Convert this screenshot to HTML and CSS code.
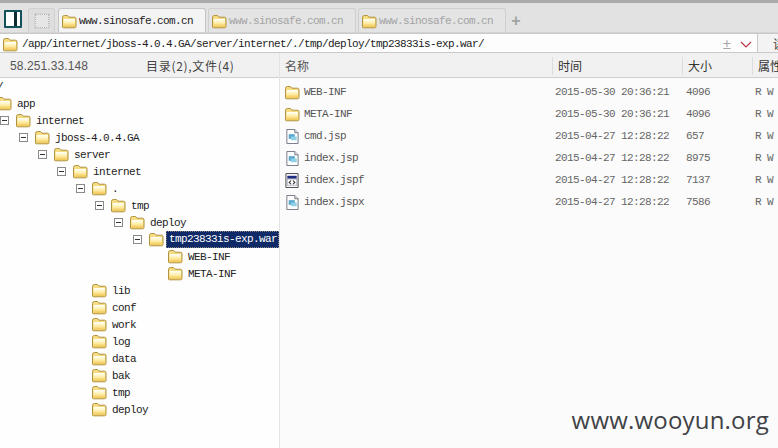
FILE: index.html
```html
<!DOCTYPE html>
<html lang="zh">
<head>
<meta charset="utf-8">
<title>www.sinosafe.com.cn</title>
<link rel="stylesheet" href="styles.css">
</head>
<body>
<svg class="defs" width="0" height="0" aria-hidden="true">
  <defs>
    <linearGradient id="fg" x1="0" y1="0" x2="0" y2="1">
      <stop offset="0" stop-color="#fffde6"/>
      <stop offset="0.5" stop-color="#feeaa0"/>
      <stop offset="1" stop-color="#f0c452"/>
    </linearGradient>
    <symbol id="folder" viewBox="0 0 16 15">
      <path d="M1.5 13V3.5Q1.5 1.5 3.5 1.5H6.5L8 3.2H13.5Q15 3.2 15 4.8V12.5Q15 13.8 13.5 13.8H2.5Q1.5 13.8 1.5 13Z" fill="#f6dc80" stroke="#b09240"/>
      <path d="M2.5 6H14V12.8H2.5Z" fill="url(#fg)"/>
      <path d="M2.5 5.5H14" stroke="#fffdf0"/>
    </symbol>
    <symbol id="page" viewBox="0 0 16 16">
      <path d="M2.5 .5H11L14.5 4V15.5H2.5Z" fill="#fff" stroke="#6f7480"/>
      <path d="M11 .5V4H14.5" fill="#e8e8e8" stroke="#6f7480"/>
      <path d="M4.5 5.5H11V10.5H4.5Z" fill="#5ba8cf"/>
      <path d="M7 8H13V12H7Z" fill="#8fd0e6"/>
    </symbol>
    <symbol id="win" viewBox="0 0 16 16">
      <path d="M1.5 .5H14.5V15.5H1.5Z" fill="#f4f4f8" stroke="#444"/>
      <path d="M3 3H13V6H3Z" fill="#1c2a80"/>
      <path d="M3 6.5H13V13H3Z" fill="#fff" stroke="#8a8a9c" stroke-width=".6"/>
      <path d="M7 8L5 10L7 12M9 8L11 10L9 12" fill="none" stroke="#222" stroke-width="1.1"/>
    </symbol>
  </defs>
</svg>

<div class="app">
  <div class="topline"></div>
  <div class="tabbar">
    <div class="panel-toggle"><span class="panel-white"><span class="panel-bar"></span></span></div>
    <div class="grid-tab"><span class="grid-glyph"></span></div>
    <div class="tab active"><svg class="ico"><use href="#folder"/></svg><span>www.sinosafe.com.cn</span></div>
    <div class="tab"><svg class="ico"><use href="#folder"/></svg><span>www.sinosafe.com.cn</span></div>
    <div class="tab"><svg class="ico"><use href="#folder"/></svg><span>www.sinosafe.com.cn</span></div>
    <div class="plus">+</div>
  </div>

  <div class="addressrow">
    <div class="address">
      <svg class="ico addr-ico"><use href="#folder"/></svg>
      <span class="path">/app/internet/jboss-4.0.4.GA/server/internet/./tmp/deploy/tmp23833is-exp.war/</span>
      <span class="plusminus">±</span>
      <svg class="chev" width="12" height="7" viewBox="0 0 12 7"><path d="M1 1L6 6L11 1" fill="none" stroke="#b8354c" stroke-width="1.2"/></svg>
    </div>
    <div class="go"><span>读</span></div>
  </div>

  <div class="main">
    <section class="left">
      <div class="lefthead"><span class="ip">58.251.33.148</span><span class="count">目录(2),文件(4)</span></div>
      <div class="tree">
        <div class="row root"><span class="label">/</span></div>
        <div class="row d0"><span class="exp"></span><svg class="ico"><use href="#folder"/></svg><span class="label">app</span></div>
        <div class="row d1"><span class="exp open"></span><svg class="ico"><use href="#folder"/></svg><span class="label">internet</span></div>
        <div class="row d2"><span class="exp open"></span><svg class="ico"><use href="#folder"/></svg><span class="label">jboss-4.0.4.GA</span></div>
        <div class="row d3"><span class="exp open"></span><svg class="ico"><use href="#folder"/></svg><span class="label">server</span></div>
        <div class="row d4"><span class="exp open"></span><svg class="ico"><use href="#folder"/></svg><span class="label">internet</span></div>
        <div class="row d5"><span class="exp open"></span><svg class="ico"><use href="#folder"/></svg><span class="label">.</span></div>
        <div class="row d6"><span class="exp open"></span><svg class="ico"><use href="#folder"/></svg><span class="label">tmp</span></div>
        <div class="row d7"><span class="exp open"></span><svg class="ico"><use href="#folder"/></svg><span class="label">deploy</span></div>
        <div class="row d8"><span class="exp open"></span><svg class="ico"><use href="#folder"/></svg><span class="label selected">tmp23833is-exp.war</span></div>
        <div class="row d9"><span class="exp"></span><svg class="ico"><use href="#folder"/></svg><span class="label">WEB-INF</span></div>
        <div class="row d9"><span class="exp"></span><svg class="ico"><use href="#folder"/></svg><span class="label">META-INF</span></div>
        <div class="row d5"><span class="exp"></span><svg class="ico"><use href="#folder"/></svg><span class="label">lib</span></div>
        <div class="row d5"><span class="exp"></span><svg class="ico"><use href="#folder"/></svg><span class="label">conf</span></div>
        <div class="row d5"><span class="exp"></span><svg class="ico"><use href="#folder"/></svg><span class="label">work</span></div>
        <div class="row d5"><span class="exp"></span><svg class="ico"><use href="#folder"/></svg><span class="label">log</span></div>
        <div class="row d5"><span class="exp"></span><svg class="ico"><use href="#folder"/></svg><span class="label">data</span></div>
        <div class="row d5"><span class="exp"></span><svg class="ico"><use href="#folder"/></svg><span class="label">bak</span></div>
        <div class="row d5"><span class="exp"></span><svg class="ico"><use href="#folder"/></svg><span class="label">tmp</span></div>
        <div class="row d5"><span class="exp"></span><svg class="ico"><use href="#folder"/></svg><span class="label">deploy</span></div>
      </div>
    </section>

    <section class="right">
      <div class="righthead cols">
        <span class="c-name">名称</span>
        <span class="c-time">时间</span>
        <span class="c-size">大小</span>
        <span class="c-attr">属性</span>
      </div>
      <div class="files">
        <div class="file cols"><span class="c-name"><svg class="ico"><use href="#folder"/></svg><span>WEB-INF</span></span><span class="c-time">2015-05-30 20:36:21</span><span class="c-size">4096</span><span class="c-attr">R W</span></div>
        <div class="file cols"><span class="c-name"><svg class="ico"><use href="#folder"/></svg><span>META-INF</span></span><span class="c-time">2015-05-30 20:36:21</span><span class="c-size">4096</span><span class="c-attr">R W</span></div>
        <div class="file cols"><span class="c-name"><svg class="ico"><use href="#page"/></svg><span>cmd.jsp</span></span><span class="c-time">2015-04-27 12:28:22</span><span class="c-size">657</span><span class="c-attr">R W</span></div>
        <div class="file cols"><span class="c-name"><svg class="ico"><use href="#page"/></svg><span>index.jsp</span></span><span class="c-time">2015-04-27 12:28:22</span><span class="c-size">8975</span><span class="c-attr">R W</span></div>
        <div class="file cols"><span class="c-name"><svg class="ico"><use href="#win"/></svg><span>index.jspf</span></span><span class="c-time">2015-04-27 12:28:22</span><span class="c-size">7137</span><span class="c-attr">R W</span></div>
        <div class="file cols"><span class="c-name"><svg class="ico"><use href="#page"/></svg><span>index.jspx</span></span><span class="c-time">2015-04-27 12:28:22</span><span class="c-size">7586</span><span class="c-attr">R W</span></div>
      </div>
    </section>
  </div>

  <div class="watermark">www.wooyun.org</div>
</div>
</body>
</html>
```

FILE: styles.css
```css
* { box-sizing: border-box; }
html, body { margin: 0; padding: 0; }
body {
  width: 778px;
  height: 448px;
  overflow: hidden;
  background: #fbfbfb;
  font-family: "Liberation Mono", "Noto Sans CJK SC", monospace;
  font-size: 11px;
  letter-spacing: -0.6px;
  color: #333;
}
.defs { position: absolute; }
.app { position: relative; width: 778px; height: 448px; display: flex; flex-direction: column; overflow: hidden; }
.topline { height: 3px; flex: none; background: #a9acaa; }
.ico { width: 16px; height: 15px; flex: none; display: block; }

.tabbar {
  height: 30px;
  flex: none;
  display: flex;
  align-items: flex-end;
  padding-left: 4px;
  background: #e1e2e1;
  border-bottom: 1px solid #d3d4d3;
}
.panel-toggle {
  width: 18px;
  height: 18px;
  margin: 0 6px 4px 0;
  padding: 2px;
  background: #12505a;
  border-radius: 1px;
}
.panel-white { display: block; width: 14px; height: 14px; background: #fff; padding-left: 8px; }
.panel-bar { display: block; width: 3px; height: 14px; background: #0f2c30; }
.grid-tab {
  width: 27px;
  height: 24px;
  margin-right: 3px;
  display: flex;
  align-items: center;
  justify-content: center;
  background: #dedede;
  border: 1px solid #d0d0d0;
  border-bottom: 0;
  border-radius: 3px 3px 0 0;
}
.grid-glyph { width: 14px; height: 14px; border: 1px dotted #b8b8b8; background: #e6e6e6; outline: 1px solid #d4d4d4; }
.tab {
  width: 148px;
  height: 24px;
  margin-right: 2px;
  display: flex;
  align-items: center;
  gap: 2px;
  padding: 1px 0 0 2px;
  color: #a3a3a3;
  background: #e4e4e4;
  border: 1px solid #cfcfcf;
  border-bottom: 0;
  border-radius: 3px 3px 0 0;
}
.tab.active { background: #f4f4f4; color: #222; border-color: #c4c4c4; }
.plus {
  margin: 0 0 1px 1px;
  width: 14px;
  font: bold 16px/20px "Liberation Sans", sans-serif;
  letter-spacing: 0;
  color: #a0a4a4;
  text-align: center;
}

.addressrow {
  height: 20px;
  flex: none;
  display: flex;
  background: #eeeeee;
  border-bottom: 1px solid #c9c9c9;
}
.address {
  flex: 1;
  display: flex;
  align-items: center;
  padding: 2px 0 0 2px;
  gap: 4px;
  background: #fdfdfd;
  border-top: 1px solid #c8c8c8;
}
.path { flex: 1; color: #222; }
.plusminus { font: 15px/16px "Liberation Sans", sans-serif; letter-spacing: 0; color: #a8a8a8; margin-right: 5px; }
.chev { margin-right: 5px; }
.go {
  width: 21px;
  flex: none;
  padding-left: 15px;
  border-left: 1px solid #c8c8c8;
  border-top: 1px solid #c8c8c8;
  background: #f3f3f3;
  font: 12px/20px "Noto Sans CJK SC", sans-serif;
  letter-spacing: 0;
  overflow: hidden;
  white-space: nowrap;
}

.main { flex: 1; display: flex; min-height: 0; }
.left { width: 280px; flex: none; display: flex; flex-direction: column; background: #fefefe; border-right: 1px solid #e3e3e3; overflow: hidden; }
.right { flex: 1; min-width: 0; display: flex; flex-direction: column; background: #fbfbfb; }

.lefthead, .righthead {
  height: 25px;
  flex: none;
  align-items: center;
  padding-top: 1px;
  background: #f1f1f1;
  border-bottom: 1px solid #cfcfcf;
  font: 12px/24px "Noto Sans CJK SC", sans-serif;
  letter-spacing: 0;
  color: #333;
  white-space: nowrap;
}
.lefthead { display: flex; }
.ip { width: 146px; padding-left: 10px; color: #555; font-family: "Liberation Sans", sans-serif; letter-spacing: .1px; }
.count { color: #444; letter-spacing: .7px; }

.tree { flex: 1; overflow: hidden; }
.row { height: 17px; display: flex; align-items: center; white-space: nowrap; color: #222; }
.root { margin-left: -3px; }
.exp { width: 9px; height: 9px; flex: none; margin-right: 6px; position: relative; }
.exp.open { border: 1px solid #8a8a8a; background: #fff; }
.exp.open::after { content: ""; position: absolute; left: 1px; right: 1px; top: 3px; height: 1px; background: #333; }
.label { margin-left: 5px; }
.root .label { margin-left: 0; }
.selected { margin-left: 2px; padding: 0 2px 0 3px; height: 17px; line-height: 17px; background: #0f2a66; color: #fff; outline: 1px dotted #888; outline-offset: -1px; }
.d0 { margin-left: -19px; }
.d1 { margin-left: 0; }
.d2 { margin-left: 19px; }
.d3 { margin-left: 38px; }
.d4 { margin-left: 57px; }
.d5 { margin-left: 76px; }
.d6 { margin-left: 95px; }
.d7 { margin-left: 114px; }
.d8 { margin-left: 133px; }
.d9 { margin-left: 152px; }

.cols { display: grid; grid-template-columns: 272px 130px 70px 1fr; align-items: center; }
.righthead { display: grid; overflow: hidden; }
.righthead .c-name { padding-left: 5px; }
.righthead .c-time, .righthead .c-size, .righthead .c-attr { padding-left: 5px; border-left: 1px solid #dcdcdc; height: 18px; line-height: 18px; overflow: hidden; }
.files { padding-top: 3px; }
.file { height: 22px; white-space: nowrap; color: #666; }
.c-name { display: flex; align-items: center; gap: 4px; padding-left: 4px; color: #555; }
.file .c-time { padding-left: 3px; }
.file .c-size { padding-left: 4px; }
.file .c-attr { padding-left: 3px; overflow: hidden; }

.watermark {
  position: absolute;
  right: 9px;
  bottom: 13px;
  font: 24px/30px "Open Sans", sans-serif;
  letter-spacing: .2px;
  color: #404246;
}
```
